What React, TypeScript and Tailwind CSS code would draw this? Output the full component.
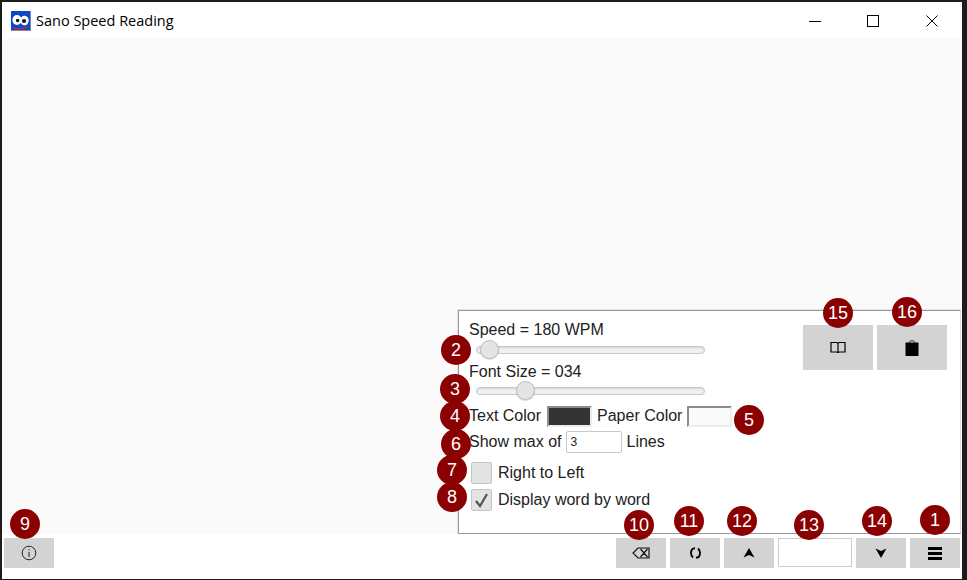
import React from 'react';

// Numbered callout over the app
const Badge: React.FC<{ n: number; className: string }> = ({ n, className }) => (
    <div className={`absolute z-10 flex h-[30px] w-[30px] items-center justify-center rounded-full bg-[#8b0000] text-[18px] leading-none text-white ${className}`}>{n}</div>
);

const GreyButton: React.FC<{ className?: string; children: React.ReactNode }> = ({ className = 'h-[30px] w-[50px]', children }) => (
    <button className={`flex items-center justify-center bg-[#d3d3d3] ${className}`}>{children}</button>
);

const Slider: React.FC<{ thumb: string }> = ({ thumb }) => (
    <div className="relative ml-[7px] mt-[2px] h-[8px] w-[229px] rounded-full border border-[#c8c8c8] bg-[#f1f1f1] shadow-[inset_0_1px_2px_rgba(0,0,0,0.12)]">
        <div className={`absolute top-[-7px] h-[19px] w-[19px] rounded-full border border-[#bdbdbd] bg-[#e4e4e4] shadow-[0_1px_1px_rgba(0,0,0,0.15)] ${thumb}`}></div>
    </div>
);

const Logo = () => (
    <svg width="20" height="20" viewBox="0 0 20 20">
        <rect width="20" height="20" fill="#0b49c9" />
        <path d="M19 0h1v20H0v-1h19z" fill="#7d8a9c" />
        <ellipse cx="6" cy="9" rx="4.6" ry="5" fill="#fff" />
        <ellipse cx="13.5" cy="9.5" rx="4.2" ry="4.8" fill="#fff" />
        <circle cx="6.6" cy="9.5" r="1.7" fill="#111" />
        <circle cx="13" cy="10" r="2.1" fill="#111" />
        <path d="M2 17.5c5 .8 10 .4 14-1.5" stroke="#d3222a" strokeWidth="1.4" fill="none" />
    </svg>
);

export default function App() {
    return (
        <div className="relative flex h-[580px] w-[967px] flex-col bg-[#1c1c1c] pb-[1px] pl-[2px] pr-[5px] pt-[2px] font-['Liberation_Sans',sans-serif] text-[16px] text-[#222]">
            {/* title bar */}
            <div className="flex h-[37px] items-center bg-white pl-[9px]">
                <Logo />
                <span className="ml-[5px] font-['Open_Sans',sans-serif] text-[14.5px] text-black">Sano Speed Reading</span>
                <div className="ml-auto flex items-center">
                    <svg width="12" height="12" viewBox="0 0 12 12" className="mr-[46px]"><path d="M0 6.5h12" stroke="#000" /></svg>
                    <svg width="12" height="12" viewBox="0 0 12 12" className="mr-[47px]"><rect x=".5" y=".5" width="11" height="11" fill="none" stroke="#000" /></svg>
                    <svg width="12" height="12" viewBox="0 0 12 12" className="mr-[24px]"><path d="M.5.5l11 11M11.5.5l-11 11" stroke="#000" /></svg>
                </div>
            </div>

            {/* reading area + settings panel */}
            <div className="relative flex flex-1 justify-end bg-[#fafafa] pr-[1px]">
                <div className="mt-[271px] flex h-[224px] w-[503px] justify-between border border-y-[#999999] border-l-[#999999] border-r-[#dddddd] bg-white pl-[10px] pr-[13px] shadow-[-1px_-1px_0_#e4e4e4]">
                    <div className="flex flex-col">
                        <div className="mt-[9px] h-[20px] leading-[20px]">Speed = 180 WPM</div>
                        <div className="mt-[4px]"><Slider thumb="left-[3px]" /></div>
                        <div className="mt-[8px] h-[20px] leading-[20px]">Font Size = 034</div>
                        <div className="mt-[3px]"><Slider thumb="left-[39px]" /></div>
                        <div className="mt-[10px] flex h-[22px] items-center">
                            Text Color
                            <span className="ml-[6px] h-[21px] w-[45px] border-2 border-[#8c8c8c] border-r-[#ededed] border-b-[#ededed] bg-[#333333]"></span>
                            <span className="ml-[5px]">Paper Color</span>
                            <span className="ml-[5px] h-[21px] w-[45px] border-2 border-[#8c8c8c] border-r-[#ededed] border-b-[#ededed] bg-[#fafafa]"></span>
                        </div>
                        <div className="mt-[4px] flex h-[22px] items-center">
                            Show max of
                            <input readOnly value="3" className="ml-[5px] h-[22px] w-[56px] rounded-[2px] border border-[#c8c8c8] bg-white px-[3px] text-[12px] text-[#222]" />
                            <span className="ml-[4px]">Lines</span>
                        </div>
                        <div className="ml-[2px] mt-[9px] flex h-[22px] items-center">
                            <span className="h-[22px] w-[21px] rounded-[2px] border border-[#c4c4c4] bg-[#e3e3e3]"></span>
                            <span className="ml-[6px]">Right to Left</span>
                        </div>
                        <div className="ml-[2px] mt-[5px] flex h-[22px] items-center">
                            <span className="flex h-[22px] w-[21px] items-center justify-center rounded-[2px] border border-[#c4c4c4] bg-[#e3e3e3]">
                                <svg width="15" height="15" viewBox="0 0 15 15"><path d="M2 8l4 5 7-12" fill="none" stroke="#555" strokeWidth="2.2" /></svg>
                            </span>
                            <span className="ml-[6px]">Display word by word</span>
                        </div>
                    </div>
                    <div className="mt-[14px] flex gap-[4px]">
                        <GreyButton className="h-[45px] w-[70px]">
                            <svg width="16" height="13" viewBox="0 0 16 13"><path d="M1 1.500h5.500c1 0 1.500.5 1.500 1 0-.5.5-1 1.500-1H15v9.500H9.500c-1 0-1.500.5-1.500 1 0-.5-.5-1-1.500-1H1zM8 2.500v9" fill="none" stroke="#000" strokeWidth="1.200" /></svg>
                        </GreyButton>
                        <GreyButton className="h-[45px] w-[70px]">
                            <svg width="14" height="16" viewBox="0 0 14 16"><path d="M.5 2.500h13V16H.5z" fill="#000" /><path d="M4.500 3V2c0-.8 1-1.300 2.500-1.300S9.500 1.200 9.500 2v1" fill="none" stroke="#333" /></svg>
                        </GreyButton>
                    </div>
                </div>
            </div>

            {/* bottom toolbar */}
            <div className="flex h-[45px] items-start bg-white px-[2px] pt-[4px]">
                <GreyButton>
                    <svg width="16" height="16" viewBox="0 0 16 16"><circle cx="8" cy="8" r="6.800" fill="none" stroke="#222" /><path d="M8 7v5M8 4v1.500" stroke="#222" /></svg>
                </GreyButton>
                <div className="ml-auto flex gap-[4px]">
                    <GreyButton>
                        <svg width="18" height="12" viewBox="0 0 18 12"><path d="M6 1h11v10H6L1 6zM8.500 2l7 8M15.500 2l-7 8" fill="none" stroke="#111" strokeWidth="1.200" /></svg>
                    </GreyButton>
                    <GreyButton>
                        <svg width="11" height="12" viewBox="0 0 11 12"><path d="M5 1.500C2 1 1 3.500 1 6s.8 3.500 2 4.500M6 10.500c3 .5 4-2 4-4.500s-.8-3.500-2-4.500" fill="none" stroke="#000" strokeWidth="1.800" /></svg>
                    </GreyButton>
                    <GreyButton>
                        <svg width="12" height="10" viewBox="0 0 12 10"><path d="M6 0l5.500 9.500L6 7 .5 9.500z" fill="#000" /></svg>
                    </GreyButton>
                    <input readOnly className="h-[29px] w-[74px] border border-[#cccccc] bg-white" />
                    <GreyButton>
                        <svg width="12" height="10" viewBox="0 0 12 10"><path d="M6 10L.5.500 6 3l5.500-2.500z" fill="#000" /></svg>
                    </GreyButton>
                    <GreyButton>
                        <svg width="14" height="13" viewBox="0 0 14 13"><path d="M0 0h14v3H0zM0 5h14v3H0zM0 10h14v3H0z" fill="#000" /></svg>
                    </GreyButton>
                </div>
            </div>

            <Badge n={1} className="left-[920px] top-[505px]" />
            <Badge n={2} className="left-[441px] top-[335px]" />
            <Badge n={3} className="left-[440px] top-[374px]" />
            <Badge n={4} className="left-[440px] top-[401px]" />
            <Badge n={5} className="left-[734px] top-[405px]" />
            <Badge n={6} className="left-[441px] top-[429px]" />
            <Badge n={7} className="left-[437px] top-[455px]" />
            <Badge n={8} className="left-[437px] top-[482px]" />
            <Badge n={9} className="left-[10px] top-[509px]" />
            <Badge n={10} className="left-[624px] top-[510px]" />
            <Badge n={11} className="left-[674px] top-[506px]" />
            <Badge n={12} className="left-[727px] top-[506px]" />
            <Badge n={13} className="left-[794px] top-[510px]" />
            <Badge n={14} className="left-[862px] top-[506px]" />
            <Badge n={15} className="left-[823px] top-[298px]" />
            <Badge n={16} className="left-[892px] top-[297px]" />
        </div>
    );
}
